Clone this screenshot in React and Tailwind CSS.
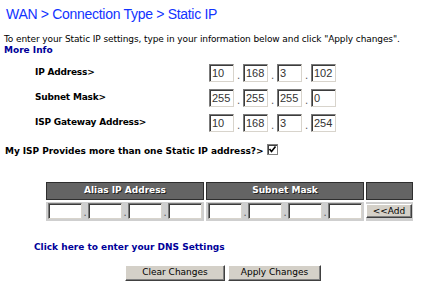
import React from "react";

const inputBorder =
  "border border-t-[#7b7b7b] border-l-[#7b7b7b] border-r-[#d8d4cc] border-b-[#d8d4cc] shadow-[inset_1px_1px_0_#3c3c3c]";

const IpBox = ({ value, big }) => (
  <input
    type="text"
    readOnly
    value={value}
    className={`${
      big ? "w-[34px] h-[16px]" : "w-[25px] h-[18px]"
    } ${inputBorder} bg-white pl-[2px] text-[11px] text-[#333] outline-none font-['Liberation_Sans',Arial,sans-serif]`}
  />
);

const Dot = ({ w }) => (
  <span
    className={`${w} self-end text-center text-[10px] leading-[12px] text-[#555]`}
  >
    .
  </span>
);

const IpGroup = ({ values }) => (
  <div className="flex items-center">
    <IpBox value={values[0]} />
    <Dot w="w-[9px]" />
    <IpBox value={values[1]} />
    <Dot w="w-[9px]" />
    <IpBox value={values[2]} />
    <Dot w="w-[9px]" />
    <IpBox value={values[3]} />
  </div>
);

const AliasGroup = () => (
  <div className="flex items-center pl-[2px]">
    <IpBox value="" big />
    <Dot w="w-[6px]" />
    <IpBox value="" big />
    <Dot w="w-[6px]" />
    <IpBox value="" big />
    <Dot w="w-[6px]" />
    <IpBox value="" big />
  </div>
);

const buttonBorder =
  "border border-t-white border-l-white border-r-[#404040] border-b-[#404040] shadow-[inset_-1px_-1px_0_#808080]";

const fields = [
  { label: "IP Address>", values: ["10", "168", "3", "102"] },
  { label: "Subnet Mask>", values: ["255", "255", "255", "0"] },
  { label: "ISP Gateway Address>", values: ["10", "168", "3", "254"] },
];

export default function App() {
  return (
    <div className="w-[425px] h-[291px] bg-white text-black font-['DejaVu_Sans',Verdana,sans-serif] overflow-hidden">
      {/* heading */}
      <h1 className="pl-[6px] pt-[5px] text-[14px] leading-[18px] tracking-[-0.3px] text-[#1233ff] font-['Liberation_Sans',Arial,sans-serif]">
        WAN &gt; Connection Type &gt; Static IP
      </h1>

      <p className="mt-[11px] pl-[4px] text-[9px] leading-[11px] tracking-[-0.1px]">
        To enter your Static IP settings, type in your information below and click "Apply changes".
      </p>
      <a className="block pl-[4px] text-[9px] leading-[11px] font-bold text-[#000099]">
        More Info
      </a>

      {/* ip fields */}
      <div className="mt-[8px] flex flex-col gap-[7px]">
        {fields.map((f) => (
          <div key={f.label} className="flex items-center">
            <span className="w-[209px] pl-[35px] text-[9px] font-bold tracking-[-0.2px]">
              {f.label}
            </span>
            <IpGroup values={f.values} />
          </div>
        ))}
      </div>

      <div className="mt-[13px] flex items-center pl-[5px]">
        <span className="text-[9px] font-bold tracking-[-0.05px]">
          My ISP Provides more than one Static IP address?&gt;
        </span>
        <svg width="11" height="11" viewBox="0 0 11 11" className="ml-[4px] -mt-[4px]">
          <rect x="0.5" y="0.5" width="10" height="10" fill="#fff" stroke="#808080" />
          <path d="M1 1.5H10M1.5 1V10" stroke="#404040" />
          <path d="M2.5 5L4.5 7.5L8.5 2.5" fill="none" stroke="#000" strokeWidth="1.6" />
        </svg>
      </div>

      {/* alias table */}
      <div className="ml-[46px] mt-[23px] w-[367px] flex flex-col gap-[2px]">
        <div className="flex gap-[2px] h-[18px]">
          <div className="w-[158px] bg-[#646464] border border-[#2e2e2e] flex items-center justify-center text-[9px] font-bold text-white [text-shadow:1px_1px_0_#222]">
            Alias IP Address
          </div>
          <div className="w-[158px] bg-[#646464] border border-[#2e2e2e] flex items-center justify-center text-[9px] font-bold text-white [text-shadow:1px_1px_0_#222]">
            Subnet Mask
          </div>
          <div className="w-[47px] bg-[#646464] border border-[#2e2e2e]" />
        </div>
        <div className="flex gap-[2px] h-[19px]">
          <div className="w-[158px] bg-[#cfcfcf] flex items-center">
            <AliasGroup />
          </div>
          <div className="w-[158px] bg-[#cfcfcf] flex items-center">
            <AliasGroup />
          </div>
          <div className="w-[47px] bg-[#cfcfcf] flex items-center">
            <button
              className={`w-[46px] h-[14px] bg-[#d4d0c8] ${buttonBorder} text-[9px] leading-none text-black`}
            >
              &lt;&lt;Add
            </button>
          </div>
        </div>
      </div>

      <a className="block mt-[21px] pl-[34px] text-[9px] leading-[11px] font-bold text-[#000099]">
        Click here to enter your DNS Settings
      </a>

      <div className="mt-[12px] flex gap-[3px] pl-[125px]">
        <button
          className={`w-[100px] h-[16px] bg-[#d4d0c8] ${buttonBorder} text-[9px] leading-none text-black`}
        >
          Clear Changes
        </button>
        <button
          className={`w-[93px] h-[16px] bg-[#d4d0c8] ${buttonBorder} text-[9px] leading-none text-black`}
        >
          Apply Changes
        </button>
      </div>
    </div>
  );
}
